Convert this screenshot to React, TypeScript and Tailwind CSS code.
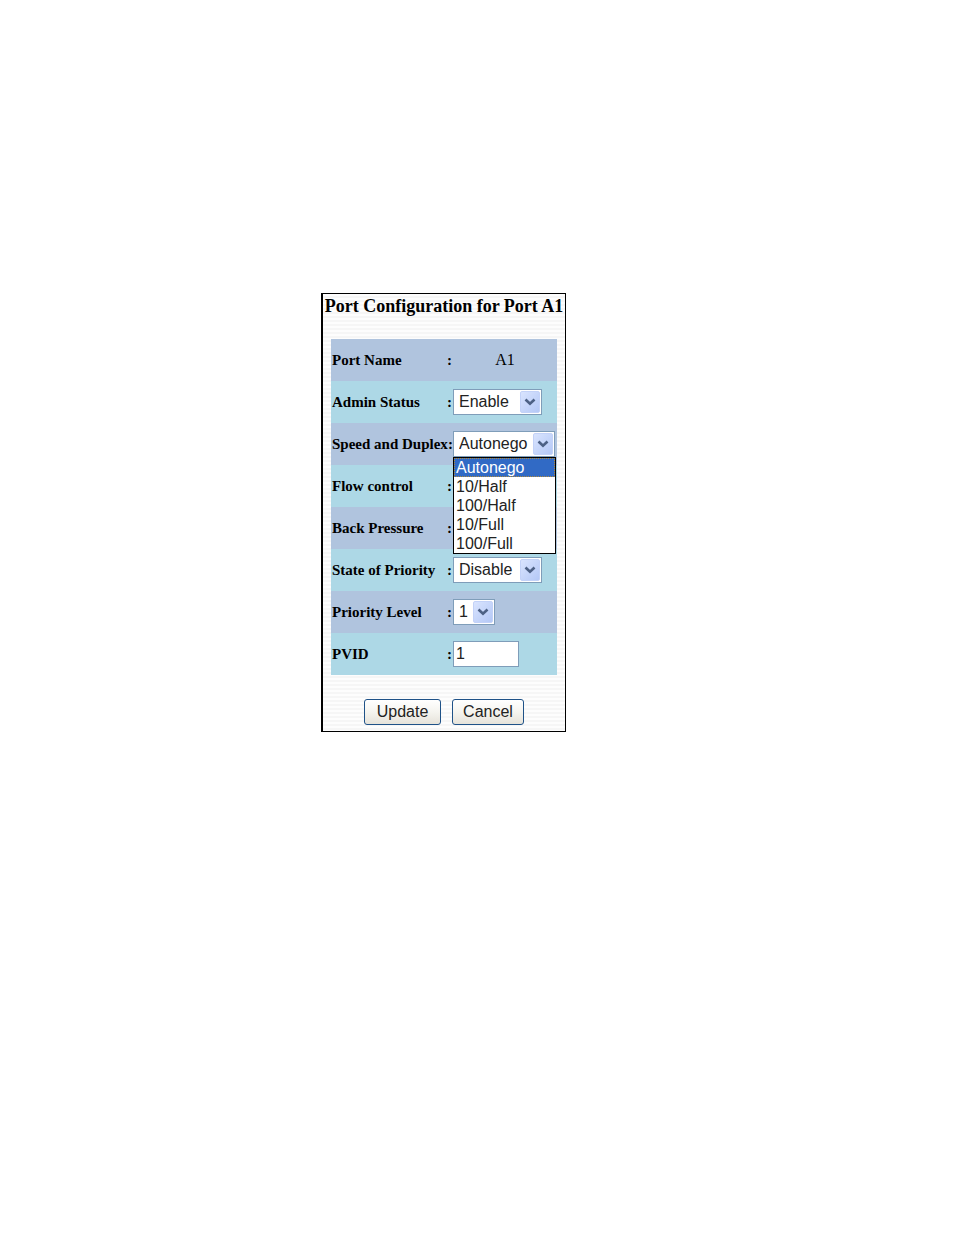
import { useState } from "react";

const speeds = ["Autonego", "10/Half", "100/Half", "10/Full", "100/Full"];

export default function App() {
  const [config, setConfig] = useState({
    admin: "Enable",
    speed: "Autonego",
    priority: "Disable",
    level: "1",
    pvid: "1",
  });
  const [speedOpen, setSpeedOpen] = useState(true);

  const update = (key: string, value: string) => {
    setConfig((previousState) => ({ ...previousState, [key]: value }));
  };

  return (
    <main className="min-h-screen bg-white pt-[293px] pl-[321px] text-black">
      <form
        className="flex w-[245px] flex-col items-center border border-l-2 border-black bg-[repeating-linear-gradient(to_bottom,#fdfdfd_0px,#fdfdfd_2px,#f6f6f6_2px,#f6f6f6_4px)] pb-[6px] font-['Liberation_Serif',serif]"
        onSubmit={(e) => e.preventDefault()}
      >
        <h1 className="text-[18px] leading-6 font-bold whitespace-nowrap">
          Port Configuration for Port A1
        </h1>

        <div className="mt-[21px] w-[226px]">
          <Row label="Port Name">
            <p className="w-full text-center text-base">A1</p>
          </Row>
          <Row label="Admin Status" htmlFor="admin">
            <Select
              id="admin"
              className="w-[89px]"
              value={config.admin}
              options={["Enable", "Disable"]}
              onChange={(value) => update("admin", value)}
            />
          </Row>
          <Row label="Speed and Duplex" htmlFor="speed">
            <div className="relative">
              <Select
                id="speed"
                className="w-[102px]"
                value={config.speed}
                options={speeds}
                onChange={(value) => update("speed", value)}
              />
              {speedOpen && (
                <ul
                  role="listbox"
                  aria-label="Speed and Duplex"
                  className="absolute top-full left-0 z-10 w-[103px] border border-black bg-white font-['Liberation_Sans',sans-serif] text-base leading-[19px] text-[#222]"
                >
                  {speeds.map((speed) => (
                    <li
                      key={speed}
                      role="option"
                      aria-selected={speed === config.speed}
                      className="h-[19px] cursor-default pl-[2px] aria-selected:bg-[#316ac5] aria-selected:text-white aria-selected:outline aria-selected:-outline-offset-1 aria-selected:outline-dotted aria-selected:outline-[#b08a3c]"
                      onClick={() => {
                        update("speed", speed);
                        setSpeedOpen(false);
                      }}
                    >
                      {speed}
                    </li>
                  ))}
                </ul>
              )}
            </div>
          </Row>
          <Row label="Flow control" />
          <Row label="Back Pressure" />
          <Row label="State of Priority" htmlFor="priority">
            <Select
              id="priority"
              className="w-[89px]"
              value={config.priority}
              options={["Disable", "Enable"]}
              onChange={(value) => update("priority", value)}
            />
          </Row>
          <Row label="Priority Level" htmlFor="level">
            <Select
              id="level"
              className="w-[42px]"
              value={config.level}
              options={["1", "2", "3", "4", "5", "6", "7"]}
              onChange={(value) => update("level", value)}
            />
          </Row>
          <Row label="PVID" htmlFor="pvid">
            <input
              id="pvid"
              type="text"
              className="h-[26px] w-[66px] border border-[#7f9db9] bg-white px-[2px] font-['Liberation_Sans',sans-serif] text-base text-[#222]"
              value={config.pvid}
              onChange={(e) => update("pvid", e.target.value)}
            />
          </Row>
        </div>

        <div className="mt-6 flex gap-[11px]">
          <Button text="Update" className="w-[77px]" />
          <Button text="Cancel" className="w-[72px]" />
        </div>
      </form>
    </main>
  );
}

type RowProps = {
  label: string;
  htmlFor?: string;
  children?: React.ReactNode;
};
const Row: React.FC<RowProps> = ({ label, htmlFor, children }) => {
  return (
    <div className="flex h-[42px] items-center bg-[#b0c4de] pl-px even:bg-[#add8e6]">
      <div className="flex w-[121px] shrink-0 justify-between pr-px text-[15px] leading-5 font-bold whitespace-nowrap">
        {htmlFor ? <label htmlFor={htmlFor}>{label}</label> : <span>{label}</span>}
        <span>:</span>
      </div>
      {children}
    </div>
  );
};

type SelectProps = {
  id: string;
  className: string;
  value: string;
  options: string[];
  onChange: (value: string) => void;
};
const Select: React.FC<SelectProps> = ({
  id,
  className,
  value,
  options,
  onChange,
}) => {
  return (
    <div className={`relative ${className}`}>
      <select
        id={id}
        className="block h-[26px] w-full appearance-none border border-[#7f9db9] bg-white pl-[5px] font-['Liberation_Sans',sans-serif] text-base leading-6 text-[#222]"
        value={value}
        onChange={(e) => onChange(e.target.value)}
      >
        {options.map((option) => (
          <option key={option}>{option}</option>
        ))}
      </select>
      <span className="pointer-events-none absolute inset-y-[2px] right-[2px] flex w-5 items-center justify-center rounded-xs border border-[#c3d2f8] bg-linear-to-br from-[#d9e4fe] to-[#b4c8f6]">
        <svg width="12" height="8" viewBox="0 0 12 8" fill="none" className="shrink-0">
          <path d="M1.5 1.5 6 5.8 10.5 1.5" stroke="#4d6185" strokeWidth="2.6" />
        </svg>
      </span>
    </div>
  );
};

type ButtonProps = {
  text: string;
  className: string;
};
const Button: React.FC<ButtonProps> = ({ text, className }) => {
  return (
    <button
      type="button"
      className={`h-[26px] rounded-[3px] border border-[#1f5288] bg-linear-to-b from-white via-[#f5f4ef] to-[#e6e3da] font-['Liberation_Sans',sans-serif] text-base leading-6 text-[#222] ${className}`}
    >
      {text}
    </button>
  );
};
